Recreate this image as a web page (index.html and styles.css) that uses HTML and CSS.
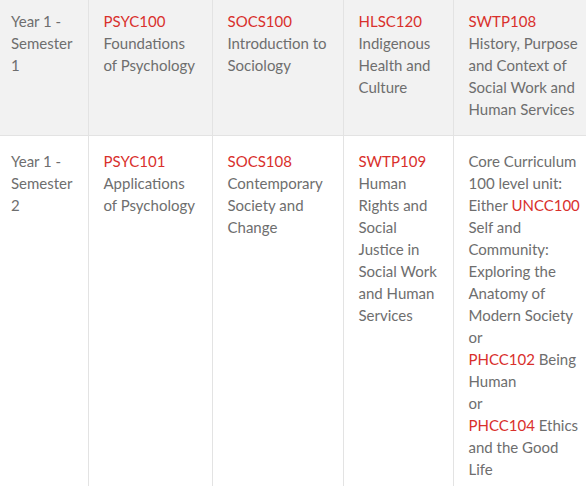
FILE: index.html
```html
<!DOCTYPE html>
<html>
<head>
<meta charset="utf-8">
<link rel="stylesheet" href="styles.css">
</head>
<body>
<table class="units">
  <colgroup>
    <col class="c1"><col class="c2"><col class="c3"><col class="c4"><col class="c5">
  </colgroup>
  <tr class="odd">
    <td>Year 1 - Semester 1</td>
    <td><span class="code">PSYC100</span><br>Foundations of Psychology</td>
    <td><span class="code">SOCS100</span><br>Introduction to Sociology</td>
    <td><span class="code">HLSC120</span><br>Indigenous Health and Culture</td>
    <td><span class="code">SWTP108</span><br>History, Purpose and Context of Social Work and Human Services</td>
  </tr>
  <tr class="even">
    <td>Year 1 - Semester 2</td>
    <td><span class="code">PSYC101</span><br>Applications of Psychology</td>
    <td><span class="code">SOCS108</span><br>Contemporary Society and Change</td>
    <td><span class="code">SWTP109</span><br>Human Rights and Social Justice in Social Work and Human Services</td>
    <td>Core Curriculum 100 level unit: Either <span class="code">UNCC100</span> Self and Community: Exploring the Anatomy of Modern Society<br>or<br><span class="code">PHCC102</span> Being Human<br>or<br><span class="code">PHCC104</span> Ethics and the Good Life</td>
  </tr>
</table>
</body>
</html>
```
FILE: styles.css
```css
html, body {
  margin: 0;
  padding: 0;
  background: #ffffff;
}
body {
  width: 586px;
  height: 486px;
  overflow: hidden;
}
.units {
  border-collapse: collapse;
  table-layout: fixed;
  width: 596px;
  font-family: Lato, "Open Sans", sans-serif;
  font-size: 15px;
  line-height: 22px;
  color: #6e6e6e;
}
.c1 { width: 88px; }
.c2 { width: 124px; }
.c3 { width: 131px; }
.c4 { width: 110px; }
.c5 { width: 143px; }
.units td {
  vertical-align: top;
  padding: 14px 15px 15px 15px;
  border-left: 1px solid #e3e3e3;
  border-bottom: 1px solid #e3e3e3;
}
.units td:first-child {
  border-left: none;
  padding-left: 11px;
}
.odd td {
  background: #f2f2f2;
  padding-top: 10px;
}
.code {
  color: #d9302c;
}
```
